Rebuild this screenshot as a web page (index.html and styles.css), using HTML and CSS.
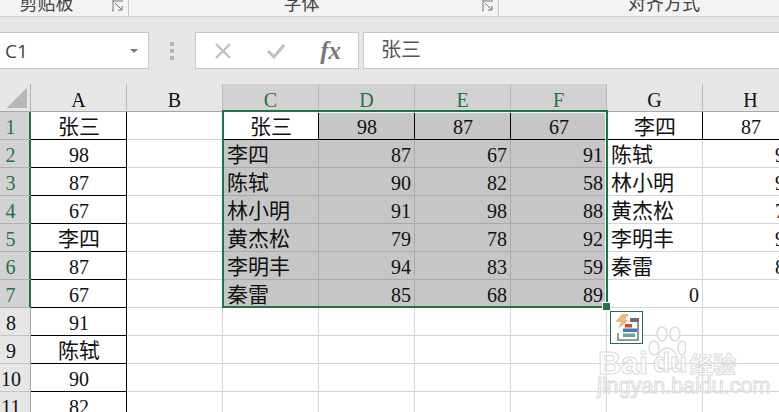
FILE: index.html
```html
<!DOCTYPE html>
<html lang="zh-CN">
<head>
<meta charset="utf-8">
<title>Excel</title>
<link rel="stylesheet" href="styles.css">
</head>
<body>
<div class="ribbon">
  <div class="group g1"><span class="glabel">剪贴板</span><svg class="launch" width="12" height="12" viewBox="0 0 12 12"><path d="M1 0V11H0M1 1H11M3 3L10 10M10 6V10H6" fill="none" stroke="#777" stroke-width="1"/></svg></div>
  <div class="group g2"><span class="glabel">字体</span><svg class="launch" width="12" height="12" viewBox="0 0 12 12"><path d="M1 0V11H0M1 1H11M3 3L10 10M10 6V10H6" fill="none" stroke="#777" stroke-width="1"/></svg></div>
  <div class="group g3"><span class="glabel">对齐方式</span></div>
</div>
<div class="fbar">
  <div class="namebox"><span>C1</span><i class="caret"></i></div>
  <div class="dots"><i></i><i></i><i></i></div>
  <div class="fbtns">
    <svg width="18" height="18" viewBox="0 0 18 18"><path d="M2 2L16 16M16 2L2 16" stroke="#c0c0c0" stroke-width="2.4" fill="none"/></svg>
    <svg width="20" height="18" viewBox="0 0 20 18"><path d="M2 9L8 15L18 3" stroke="#c0c0c0" stroke-width="3" fill="none"/></svg>
    <span class="fx">fx</span>
  </div>
  <div class="finput">张三</div>
</div>
<div class="sheet">
  <div class="corner"><i></i></div>
  <div class="h">A</div><div class="h">B</div><div class="h hs">C</div><div class="h hs">D</div><div class="h hs">E</div><div class="h hs">F</div><div class="h">G</div><div class="h">H</div>

  <div class="r rs">1</div><div class="c b ct zh">张三</div><div class="c"></div><div class="c b ct zh">张三</div><div class="c b ct s">98</div><div class="c b ct s">87</div><div class="c b ct s">67</div><div class="c b ct zh">李四</div><div class="c b ct">87</div>

  <div class="r rs">2</div><div class="c b ct">98</div><div class="c"></div><div class="c s sg zh">李四</div><div class="c s sg n">87</div><div class="c s sg n">67</div><div class="c s sg n">91</div><div class="c zh">陈轼</div><div class="c n">90</div>

  <div class="r rs">3</div><div class="c b ct">87</div><div class="c"></div><div class="c s sg zh">陈轼</div><div class="c s sg n">90</div><div class="c s sg n">82</div><div class="c s sg n">58</div><div class="c zh">林小明</div><div class="c n">91</div>

  <div class="r rs">4</div><div class="c b ct">67</div><div class="c"></div><div class="c s sg zh">林小明</div><div class="c s sg n">91</div><div class="c s sg n">98</div><div class="c s sg n">88</div><div class="c zh">黄杰松</div><div class="c n">79</div>

  <div class="r rs">5</div><div class="c b ct zh">李四</div><div class="c"></div><div class="c s sg zh">黄杰松</div><div class="c s sg n">79</div><div class="c s sg n">78</div><div class="c s sg n">92</div><div class="c zh">李明丰</div><div class="c n">94</div>

  <div class="r rs">6</div><div class="c b ct">87</div><div class="c"></div><div class="c s sg zh">李明丰</div><div class="c s sg n">94</div><div class="c s sg n">83</div><div class="c s sg n">59</div><div class="c zh">秦雷</div><div class="c n">85</div>

  <div class="r rs">7</div><div class="c b ct">67</div><div class="c"></div><div class="c s sg zh">秦雷</div><div class="c s sg n">85</div><div class="c s sg n">68</div><div class="c s sg n">89</div><div class="c n">0</div><div class="c"></div>

  <div class="r">8</div><div class="c b ct">91</div><div class="c"></div><div class="c"></div><div class="c"></div><div class="c"></div><div class="c"></div><div class="c"></div><div class="c"></div>
  <div class="r">9</div><div class="c b ct zh">陈轼</div><div class="c"></div><div class="c"></div><div class="c"></div><div class="c"></div><div class="c"></div><div class="c"></div><div class="c"></div>
  <div class="r">10</div><div class="c b ct">90</div><div class="c"></div><div class="c"></div><div class="c"></div><div class="c"></div><div class="c"></div><div class="c"></div><div class="c"></div>
  <div class="r">11</div><div class="c b ct">82</div><div class="c"></div><div class="c"></div><div class="c"></div><div class="c"></div><div class="c"></div><div class="c"></div><div class="c"></div>

  <div class="selection"></div>
  <div class="handle"></div>
  <div class="quick">
    <svg width="29" height="29" viewBox="0 0 29 29">
      <path d="M18 6H26V27H6V20" fill="none" stroke="#777" stroke-width="1.5"/>
      <rect x="18" y="5" width="9" height="4" fill="#6e6e6e"/>
      <path d="M10 1H17L13 7H17L6 16L9 9H3Z" fill="#e9bb80"/>
      <rect x="13" y="11" width="7" height="3.5" fill="#d5492a"/>
      <rect x="11" y="15.500" width="14" height="3.500" fill="#4a7ab5"/>
      <rect x="11" y="20.500" width="12" height="3.500" fill="#64a898"/>
    </svg>
  </div>
  <div class="mark">
    <svg class="paw" width="38" height="46" viewBox="0 0 38 46" fill="rgba(255,255,255,.55)" stroke="#dcdcdc" stroke-width="1.500">
      <ellipse cx="6" cy="22" rx="5" ry="7"/>
      <ellipse cx="14" cy="8" rx="5" ry="7"/>
      <ellipse cx="27" cy="8" rx="5" ry="7"/>
      <ellipse cx="34" cy="22" rx="4" ry="7"/>
      <path d="M19 22C26 22 33 34 29 40C25 44 13 44 9 40C6 34 12 22 19 22Z"/>
    </svg>
    <span class="mbai">Bai</span><span class="mdu">du</span><span class="mjy">经验</span>
    <span class="murl">jingyan.baidu.com</span>
  </div>
</div>
</body>
</html>
```
FILE: styles.css
```css
* { box-sizing: border-box; }
html, body { margin: 0; padding: 0; }
body {
  width: 779px;
  height: 412px;
  overflow: hidden;
  background: #fff;
  font-family: "Liberation Serif", "Noto Sans CJK SC", serif;
  color: #111;
}
.ribbon {
  height: 17px;
  display: flex;
  background: #f3f3f3;
  border-bottom: 1px solid #d2d2d2;
  overflow: hidden;
}
.group {
  position: relative;
  height: 16px;
  border-right: 1px solid #c8c8c8;
  display: flex;
  justify-content: center;
  align-items: flex-start;
  flex: none;
}
.g1 { width: 129px; padding-right: 35px; }
.g2 { width: 370px; padding-right: 24px; }
.g3 { flex: 1; border-right: 0; padding-left: 50px; }
.glabel {
  font: 18px/22px "Noto Sans CJK SC", sans-serif;
  color: #444;
  margin-top: -9px;
}
.launch { position: absolute; right: 4px; top: 0; }
.fbar {
  height: 67px;
  background: #e6e6e6;
  display: flex;
  align-items: flex-start;
  padding-top: 15px;
}
.namebox {
  width: 150px;
  height: 37px;
  margin-left: -1px;
  background: #fff;
  border: 1px solid #c6c6c6;
  display: flex;
  align-items: center;
  justify-content: space-between;
  padding: 0 10px 0 5px;
  font: 19px "Open Sans", sans-serif;
  color: #444;
}
.caret {
  width: 0;
  height: 0;
  border-left: 4px solid transparent;
  border-right: 4px solid transparent;
  border-top: 4px solid #777;
}
.dots {
  width: 46px;
  height: 37px;
  display: flex;
  flex-direction: column;
  align-items: center;
  justify-content: center;
  gap: 3px;
}
.dots i { width: 4px; height: 4px; background: #b4b4b4; display: block; }
.fbtns {
  width: 164px;
  height: 37px;
  background: #fff;
  border: 1px solid #c6c6c6;
  display: flex;
  align-items: center;
  padding: 0 17px 0 18px;
  justify-content: space-between;
}
.fx {
  font: italic bold 25px "Liberation Serif", serif;
  color: #777;
}
.finput {
  flex: 1;
  height: 37px;
  margin-left: 4px;
  margin-right: -2px;
  background: #fff;
  border: 1px solid #c6c6c6;
  padding-left: 17px;
  font: 20px/31px "Noto Sans CJK SC", sans-serif;
  color: #555;
}
.sheet {
  position: relative;
  display: grid;
  grid-template-columns: 31px repeat(8, 96px);
  grid-auto-rows: 28px;
  font-size: 20px;
  line-height: 27px;
}
.corner {
  background: #e6e6e6;
  border-right: 1px solid #b0b0b0;
  border-bottom: 1px solid #a8a8a8;
  padding: 4px 0 0 7px;
}
.corner i {
  display: block;
  width: 20px;
  height: 20px;
  background: linear-gradient(135deg, transparent 50%, #b8b8b8 50%);
}
.h {
  background: #e6e6e6;
  border-right: 1px solid #b8b8b8;
  border-bottom: 1px solid #a8a8a8;
  text-align: center;
  line-height: 32px;
  overflow: hidden;
}
.hs { background: #d2d2d2; color: #217346; }
.r {
  background: #e6e6e6;
  border-right: 1px solid #a8a8a8;
  border-bottom: 1px solid #c4c4c4;
  padding: 2px 8px 0 0;
  text-align: center;
  overflow: hidden;
}
.rs {
  background: #d2d2d2;
  color: #217346;
  border-right: 2px solid #217346;
  border-bottom-color: #b0b0b0;
}
.c {
  background: #fff;
  border-right: 1px solid #d4d4d4;
  border-bottom: 1px solid #d4d4d4;
  padding: 2px 3px 0 4px;
  white-space: nowrap;
  overflow: visible;
}
.zh { font-size: 21px; line-height: 27px; }
.b { border-right-color: #000; border-bottom-color: #000; }
.ct { text-align: center; }
.n { text-align: right; }
.s { background: #c6c6c6; }
.sg { border-right-color: #aaa; border-bottom-color: #aaa; }
.selection {
  position: absolute;
  left: 222px;
  top: 26px;
  width: 386px;
  height: 198px;
  border: 2px solid #217346;
  box-shadow: inset -1px 1px 0 rgba(255,255,255,.8);
  pointer-events: none;
}
.handle {
  position: absolute;
  left: 603px;
  top: 219px;
  width: 7px;
  height: 7px;
  background: #217346;
  border-left: 1px solid #fff;
  border-top: 1px solid #fff;
  box-sizing: content-box;
  margin: -1px 0 0 -1px;
}
.quick {
  position: absolute;
  left: 610px;
  top: 227px;
  width: 33px;
  height: 33px;
  background: #fff;
  border: 1px solid #217346;
  padding: 1px;
}
.mark {
  position: absolute;
  left: 596px;
  top: 240px;
  width: 145px;
  height: 72px;
  color: rgba(255,255,255,.6);
  -webkit-text-stroke: 1px #dadada;
  pointer-events: none;
}
.paw { position: absolute; left: 52px; top: 2px; }
.mbai, .mdu, .mjy, .murl { position: absolute; white-space: nowrap; }
.mbai { left: 2px; top: 26px; font: bold 32px/26px "Liberation Sans", sans-serif; }
.mdu { left: 57px; top: 26px; font: bold 28px/26px "Liberation Sans", sans-serif; }
.mjy { left: 94px; top: 26px; font: bold 23px/26px "Noto Sans CJK SC", sans-serif; }
.murl { left: 1px; top: 54px; font: 21.500px/17px "Liberation Sans", sans-serif; }
```
